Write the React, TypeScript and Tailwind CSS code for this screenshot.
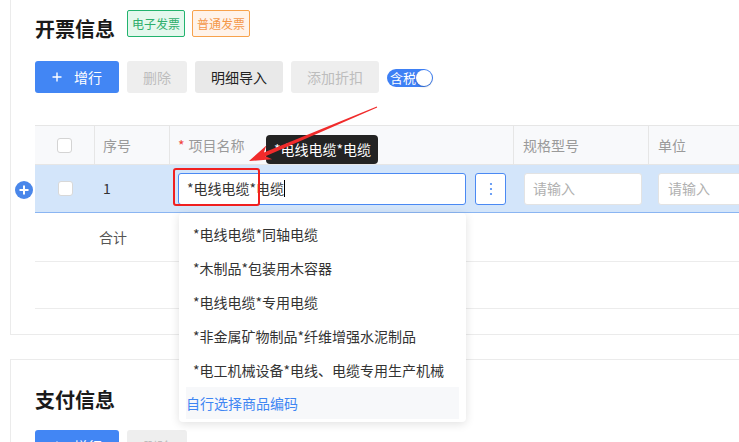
import React from "react";

const items = [
  "*电线电缆*同轴电缆",
  "*木制品*包装用木容器",
  "*电线电缆*专用电缆",
  "*非金属矿物制品*纤维增强水泥制品",
  "*电工机械设备*电线、电缆专用生产机械",
];

function PlusIcon({ className }: { className?: string }) {
  return (
    <svg className={className} viewBox="0 0 10 10" width="10" height="10">
      <path d="M5 0.5V9.5M0.5 5H9.5" stroke="currentColor" strokeWidth="1.4" fill="none" />
    </svg>
  );
}

export default function App() {
  return (
    <div className="relative w-[739px] h-[442px] overflow-hidden bg-white font-['Noto_Sans_CJK_SC','Noto_Sans',sans-serif] text-[14px] text-[#333]">
      {/* Card 1 */}
      <div className="ml-[10px] w-[800px] h-[335px] box-border border-l border-b border-[#ebebeb] pl-[24px] pt-[10px]">
        <div className="flex items-start h-[37px]">
          <div className="mt-[5px] text-[20px] leading-[28px] font-bold text-[#1a1a1a]">开票信息</div>
          <div className="ml-[12px] flex gap-[7px]">
            <span className="h-[27px] box-border px-[4px] border border-[#22b36e] bg-[#e4f8ed] text-[#2fae6c] text-[12px] leading-[25px] rounded-[2px]">电子发票</span>
            <span className="h-[27px] box-border px-[4px] border border-[#f7a24c] bg-[#fff3ea] text-[#f4984a] text-[12px] leading-[25px] rounded-[2px]">普通发票</span>
          </div>
        </div>
        <div className="mt-[14px] flex items-center gap-[8px] h-[32px]">
          <button className="w-[84px] h-[32px] rounded-[3px] bg-[#4286f4] text-white flex items-center justify-center gap-[12px]">
            <PlusIcon className="w-[10px] h-[10px]" />
            <span>增行</span>
          </button>
          <button className="w-[60px] h-[32px] rounded-[3px] bg-[#eeeeee] text-[#bdbdbd]">删除</button>
          <button className="w-[88px] h-[32px] rounded-[3px] bg-[#e9e9e9] text-[#222]">明细导入</button>
          <button className="w-[88px] h-[32px] rounded-[3px] bg-[#eeeeee] text-[#bdbdbd]">添加折扣</button>
          <div className="w-[46px] h-[18px] rounded-full bg-[#3e80f5] flex items-center justify-between pl-[3px] pr-[1px] mt-[2px]">
            <span className="text-white text-[13px] leading-[18px]">含税</span>
            <span className="w-[16px] h-[16px] rounded-full bg-white shadow-[0_1px_2px_rgba(0,0,0,0.2)]" />
          </div>
        </div>

        {/* Table */}
        <div className="mt-[32px] w-[760px]">
          <div className="flex h-[40px] box-border border-t border-b border-[#e6e6e6] bg-[#f8f9fb] text-[#9a9a9a]">
            <div className="w-[60px] border-r border-[#e6e6e6] flex items-center justify-center">
              <span className="w-[15px] h-[15px] rounded-[3px] border border-[#d4d4d4] bg-white" />
            </div>
            <div className="w-[75px] border-r border-[#e6e6e6] flex items-center pl-[8px]">序号</div>
            <div className="w-[344px] border-r border-[#e6e6e6] flex items-center pl-[8px]">
              <span className="text-[#f0433a] mr-[4px]">*</span>项目名称
            </div>
            <div className="w-[135px] border-r border-[#e6e6e6] flex items-center pl-[9px]">规格型号</div>
            <div className="flex-1 flex items-center pl-[9px]">单位</div>
          </div>

          <div className="relative flex h-[48px] box-border border-b border-[#8ab5f2] bg-[#d3e5fa]">
            <span className="absolute left-[-20px] top-[16px] w-[18px] h-[18px] rounded-full bg-[#4a87ea] text-white flex items-center justify-center">
              <svg viewBox="0 0 10 10" width="10" height="10">
                <path d="M5 0.5V9.5M0.5 5H9.5" stroke="currentColor" strokeWidth="2" fill="none" />
              </svg>
            </span>
            <div className="w-[60px] flex items-center justify-center">
              <span className="w-[15px] h-[15px] rounded-[3px] border border-[#d8d8d8] bg-white" />
            </div>
            <div className="w-[75px] flex items-center pl-[8px] text-[#333]">1</div>
            <div className="w-[344px] flex items-center pl-[8px] gap-[9px]">
              <div className="w-[288px] h-[32px] box-border rounded-[3px] border border-[#4a89f3] bg-white flex items-center pl-[8px] text-[#333]">
                <span>*电线电缆*电缆</span>
                <span className="w-[1px] h-[17px] bg-black" />
              </div>
              <div className="w-[31px] h-[32px] box-border rounded-[3px] border border-[#4a89f3] bg-white flex items-center justify-center">
                <svg viewBox="0 0 4 14" width="4" height="14">
                  <circle cx="2" cy="2" r="1.1" fill="#4a89f3" />
                  <circle cx="2" cy="7" r="1.1" fill="#4a89f3" />
                  <circle cx="2" cy="12" r="1.1" fill="#4a89f3" />
                </svg>
              </div>
            </div>
            <div className="w-[135px] flex items-center pl-[10px]">
              <div className="w-[118px] h-[32px] box-border rounded-[3px] border border-[#e3e3e3] bg-white flex items-center pl-[8px] text-[#b0b0b0]">请输入</div>
            </div>
            <div className="flex-1 flex items-center pl-[9px]">
              <div className="w-[118px] h-[32px] box-border rounded-[3px] border border-[#e3e3e3] bg-white flex items-center pl-[9px] text-[#b0b0b0]">请输入</div>
            </div>
          </div>

          <div className="flex h-[49px] box-border border-b border-[#ececec]">
            <div className="w-[60px]" />
            <div className="w-[75px] flex items-center pl-[4px] text-[#555]">合计</div>
          </div>
          <div className="h-[47px] box-border border-b border-[#ececec]" />
        </div>
      </div>

      {/* Card 2 */}
      <div className="ml-[10px] mt-[24px] w-[800px] h-[200px] box-border border-l border-t border-[#ebebeb] pl-[24px] pt-[26px]">
        <div className="text-[20px] leading-[28px] font-bold text-[#1a1a1a]">支付信息</div>
        <div className="mt-[16px] flex items-center gap-[8px]">
          <button className="w-[84px] h-[32px] rounded-[3px] bg-[#4286f4] text-white flex items-center justify-center gap-[12px]">
            <PlusIcon className="w-[10px] h-[10px]" />
            <span>增行</span>
          </button>
          <button className="w-[60px] h-[32px] rounded-[3px] bg-[#eeeeee] text-[#bdbdbd]">删除</button>
        </div>
      </div>

      {/* Dropdown */}
      <div className="absolute left-[179px] top-[213px] w-[287px] h-[209px] rounded-[4px] bg-white shadow-[0_2px_10px_rgba(0,0,0,0.12)] pt-[4px] px-[7px]">
        {items.map((t) => (
          <div key={t} className="h-[34px] flex items-center pl-[7px] text-[#333] whitespace-nowrap">{t}</div>
        ))}
        <div className="h-[32px] flex items-center bg-[#f7f8fa] text-[#3f86f3] whitespace-nowrap">自行选择商品编码</div>
      </div>

      {/* Tooltip */}
      <div className="absolute left-[266px] top-[135px] w-[112px] h-[29px] rounded-[4px] bg-[#232323] text-white flex items-center pl-[8px] whitespace-nowrap">*电线电缆*电缆</div>

      {/* Red highlight */}
      <div className="absolute left-[173px] top-[168px] w-[87px] h-[38px] box-border border-2 border-[#f02020] rounded-[3px]" />

      {/* Arrow */}
      <svg className="absolute left-0 top-0 pointer-events-none" width="739" height="442" viewBox="0 0 739 442">
        <polygon
          points="249,161 272.2,159.35 265.44,156.23 377.19,107.46 376.81,106.54 263.88,152.55 266.34,145.53"
          fill="#f02b2b"
        />
      </svg>
    </div>
  );
}
